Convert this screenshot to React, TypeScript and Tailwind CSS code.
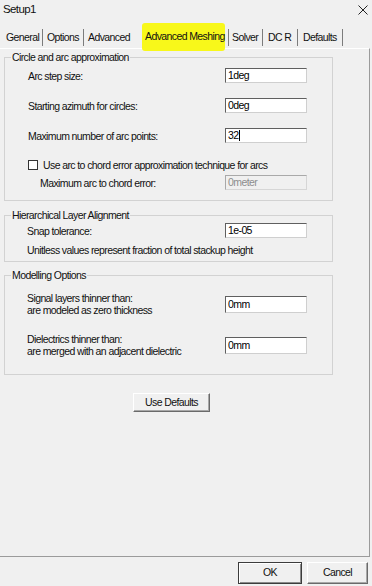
import React from 'react';
import clsx from 'clsx';

interface EditProps {
  value: string;
  disabled?: boolean;
  caret?: boolean;
  tall?: boolean;
}

const Edit: React.FC<EditProps> = ({ value, disabled, caret, tall }) => (
  <div
    className={clsx(
      'flex w-[82px] items-center border pl-[2px] leading-none',
      tall ? 'h-[17px]' : 'h-[15px]',
      disabled
        ? 'border-t-[#a9a9a9] border-l-[#a9a9a9] border-r-[#d6d6d6] border-b-[#d6d6d6] bg-[#f0f0f0] text-[#8d8d8d]'
        : 'border-t-[#5f5f5f] border-l-[#5f5f5f] border-r-[#cfcfcf] border-b-[#cfcfcf] bg-white text-black'
    )}
  >
    {value}
    {caret && <span className="ml-px h-[11px] w-px bg-black" />}
  </div>
);

interface TabProps {
  label: string;
  width: string;
  pad: string;
}

const Tab: React.FC<TabProps> = ({ label, width, pad }) => (
  <div
    className={clsx(
      'flex h-[17px] items-center border-r border-r-[#7c7c7c]',
      width,
      pad
    )}
  >
    {label}
  </div>
);

const Group: React.FC<{ title: string; className?: string; children: React.ReactNode }> = ({
  title,
  className,
  children,
}) => (
  <fieldset
    className={clsx('ml-[4px] w-[329px] border border-[#d2d2d2]', className)}
  >
    <legend className="ml-[6px] px-[1px] leading-[12px]">{title}</legend>
    {children}
  </fieldset>
);

const Row: React.FC<{ label: string; labelWidth: string; pad: string; children: React.ReactNode; className?: string }> = ({
  label,
  labelWidth,
  pad,
  children,
  className,
}) => (
  <div className={clsx('flex items-center', pad, className)}>
    <span className={clsx('leading-[12px]', labelWidth)}>{label}</span>
    {children}
  </div>
);

const App: React.FC = () => {
  return (
    <div className="flex h-[586px] w-[372px] flex-col overflow-hidden bg-[#f0f0f0] font-['Liberation_Sans',Arial,sans-serif] text-[10.5px] tracking-[-0.6px] text-[#111]">
      {/* title bar */}
      <div className="flex h-[20px] items-center justify-between pl-[3px] pr-[4px]">
        <span className="text-[11.5px] leading-none">Setup1</span>
        <svg width="10" height="10" viewBox="0 0 10 10" className="text-[#222]">
          <path d="M0.5 0.5 L9.5 9.5 M9.5 0.5 L0.5 9.5" stroke="currentColor" strokeWidth="1" fill="none" />
        </svg>
      </div>

      {/* tabs */}
      <div className="relative z-10 flex h-[28px] items-start pl-[2px] pt-[9px]">
        <Tab label="General" width="w-[41px]" pad="pl-[4px]" />
        <Tab label="Options" width="w-[41px]" pad="pl-[4px]" />
        <div className="flex h-[17px] w-[55px] items-center pl-[4px]">Advanced</div>
        <div className="flex h-[17px] w-[90px] items-center border-r border-r-[#7c7c7c] pl-[3px]">
          <span className="relative -top-[1px] flex h-[28px] w-[83px] shrink-0 items-center rounded-[3px] bg-[#f8f81a] pl-[3px]">
            Advanced Meshing
          </span>
        </div>
        <Tab label="Solver" width="w-[34px]" pad="pl-[3px]" />
        <Tab label="DC R" width="w-[35px]" pad="pl-[5px]" />
        <Tab label="Defaults" width="w-[45px]" pad="pl-[5px]" />
      </div>

      {/* tab page */}
      <div className="flex h-[509px] w-[370px] flex-col border-t border-r border-b border-t-white border-r-[#9b9b9b] border-b-[#9b9b9b]">
        <Group title="Circle and arc approximation" className="mt-[2px] pb-[10px]">
          <div className="mt-[5px] flex flex-col gap-[15px]">
            <Row label="Arc step size:" labelWidth="w-[197px]" pad="pl-[23px]">
              <Edit value="1deg" />
            </Row>
            <Row label="Starting azimuth for circles:" labelWidth="w-[197px]" pad="pl-[23px]">
              <Edit value="0deg" />
            </Row>
            <Row label="Maximum number of arc points:" labelWidth="w-[197px]" pad="pl-[23px]">
              <Edit value="32" caret />
            </Row>
          </div>
          <div className="mt-[17px] flex h-[10px] items-center gap-[5px] pl-[23px]">
            <span className="h-[10px] w-[10px] border border-[#333] bg-white" />
            <span className="leading-[12px]">Use arc to chord error approximation technique for arcs</span>
          </div>
          <Row label="Maximum arc to chord error:" labelWidth="w-[185px]" pad="pl-[35px]" className="mt-[5px]">
            <Edit value="0meter" disabled />
          </Row>
        </Group>

        <Group title="Hierarchical Layer Alignment" className="mt-[8px] pb-[5px]">
          <Row label="Snap tolerance:" labelWidth="w-[198px]" pad="pl-[22px]" className="mt-[2px]">
            <Edit value="1e-05" />
          </Row>
          <div className="mt-[6px] pl-[22px] leading-[12px]">
            Unitless values represent fraction of total stackup height
          </div>
        </Group>

        <Group title="Modelling Options" className="mt-[7px] pb-[17px]">
          <div className="mt-[11px] flex items-center pl-[22px]">
            <div className="w-[198px] leading-[12px]">
              <div>Signal layers thinner than:</div>
              <div>are modeled as zero thickness</div>
            </div>
            <Edit value="0mm" tall />
          </div>
          <div className="mt-[17px] flex items-center pl-[22px]">
            <div className="w-[198px] leading-[12px]">
              <div>Dielectrics thinner than:</div>
              <div>are merged with an adjacent dielectric</div>
            </div>
            <Edit value="0mm" tall />
          </div>
        </Group>

        <div className="ml-[133px] mt-[18px] flex h-[19px] w-[77px] items-center justify-center border border-t-white border-l-white border-r-[#6a6a6a] border-b-[#6a6a6a] bg-[#f0f0f0] shadow-[inset_-1px_-1px_0_#a8a8a8]">
          Use Defaults
        </div>
      </div>

      {/* dialog buttons */}
      <div className="mt-[5px] flex h-[22px] justify-end gap-[5px] pr-[4px]">
        <div className="flex w-[64px] items-center justify-center border border-[#3c3c3c] bg-[#f0f0f0] shadow-[inset_1px_1px_0_#ffffff,inset_-1px_-1px_0_#8a8a8a]">
          OK
        </div>
        <div className="flex w-[61px] items-center justify-center border border-t-white border-l-white border-r-[#6a6a6a] border-b-[#6a6a6a] bg-[#f0f0f0] shadow-[inset_-1px_-1px_0_#a8a8a8]">
          Cancel
        </div>
      </div>
    </div>
  );
};

export default App;
